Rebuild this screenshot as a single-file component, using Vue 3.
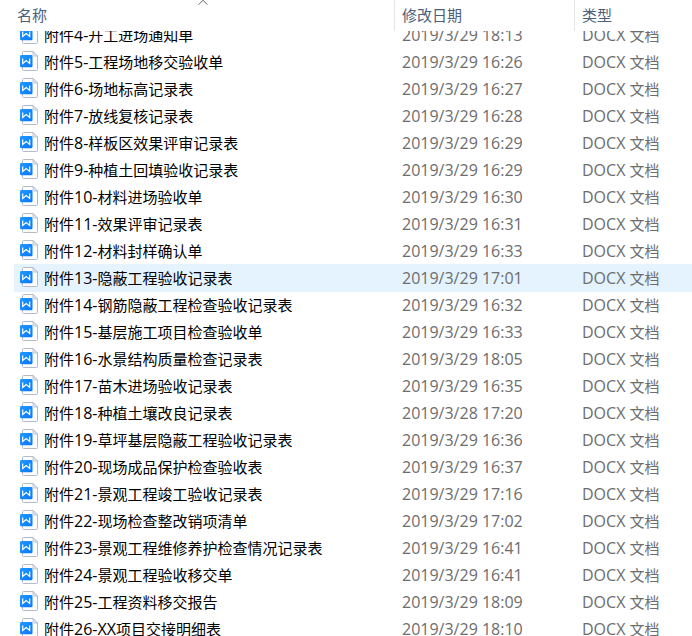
<script setup>
const selected = 13

const files = [
  [4, '开工进场通知单', '2019/3/29 18:13'],
  [5, '工程场地移交验收单', '2019/3/29 16:26'],
  [6, '场地标高记录表', '2019/3/29 16:27'],
  [7, '放线复核记录表', '2019/3/29 16:28'],
  [8, '样板区效果评审记录表', '2019/3/29 16:29'],
  [9, '种植土回填验收记录表', '2019/3/29 16:29'],
  [10, '材料进场验收单', '2019/3/29 16:30'],
  [11, '效果评审记录表', '2019/3/29 16:31'],
  [12, '材料封样确认单', '2019/3/29 16:33'],
  [13, '隐蔽工程验收记录表', '2019/3/29 17:01'],
  [14, '钢筋隐蔽工程检查验收记录表', '2019/3/29 16:32'],
  [15, '基层施工项目检查验收单', '2019/3/29 16:33'],
  [16, '水景结构质量检查记录表', '2019/3/29 18:05'],
  [17, '苗木进场验收记录表', '2019/3/29 16:35'],
  [18, '种植土壤改良记录表', '2019/3/28 17:20'],
  [19, '草坪基层隐蔽工程验收记录表', '2019/3/29 16:36'],
  [20, '现场成品保护检查验收表', '2019/3/29 16:37'],
  [21, '景观工程竣工验收记录表', '2019/3/29 17:16'],
  [22, '现场检查整改销项清单', '2019/3/29 17:02'],
  [23, '景观工程维修养护检查情况记录表', '2019/3/29 16:41'],
  [24, '景观工程验收移交单', '2019/3/29 16:41'],
  [25, '工程资料移交报告', '2019/3/29 18:09'],
  [26, 'XX项目交接明细表', '2019/3/29 18:10'],
].map(([no, title, date]) => ({
  no,
  date,
  // Latin and Chinese runs are set at slightly different sizes
  runs: `附件${no}-${title}`.match(/[\x20-\x7e]+|[^\x20-\x7e]+/g),
}))

const isLatin = (run) => /^[\x20-\x7e]+$/.test(run)
</script>

<template>
  <main class="explorer">
    <table class="files">
      <thead class="head">
        <tr class="row head-row">
          <th class="col sorted" scope="col" aria-sort="ascending">
            名称
            <svg class="sort" width="10" height="5" viewBox="0 0 10 5" aria-hidden="true">
              <path d="M0.5 4.7 L5 0.3 L9.5 4.7" fill="none" stroke="#666" stroke-width="1" />
            </svg>
          </th>
          <th class="col divided" scope="col">修改日期</th>
          <th class="col divided" scope="col">类型</th>
        </tr>
      </thead>
      <tbody class="body">
        <tr v-for="file in files" :key="file.no" class="row" :class="{ active: file.no === selected }">
          <td class="name">
            <svg class="icon" width="18" height="20" viewBox="0 0 18 20" aria-hidden="true">
              <defs>
                <linearGradient id="doc-blue" x1="0" y1="0" x2="1" y2="1">
                  <stop offset="0" stop-color="#1f9aff" />
                  <stop offset="1" stop-color="#0a76fa" />
                </linearGradient>
              </defs>
              <path d="M3.5 0.5 H13 L17.5 5 V18.5 Q17.5 19.5 16.5 19.5 H3.5 Q2.5 19.5 2.5 18.5 V1.5 Q2.5 0.5 3.5 0.5Z" fill="#fbfcfe" stroke="#b4bac6" />
              <path d="M13 0.5 V4 Q13 5 14 5 H17.5Z" fill="#e4e8ee" stroke="#b4bac6" stroke-width="0.8" />
              <rect x="0" y="4" width="12.5" height="12.3" rx="1.4" fill="url(#doc-blue)" />
              <path d="M2.7 7.4 V12.4 L6.2 9.6 L9.7 12.4 V7.4" fill="none" stroke="#fff" stroke-width="1.2" />
            </svg>
            <span class="label"><span v-for="(run, i) in file.runs" :key="i" :class="{ latin: isLatin(run) }">{{ run }}</span></span>
          </td>
          <td class="meta"><span class="latin">{{ file.date }}</span></td>
          <td class="meta"><span class="latin">DOCX </span>文档</td>
        </tr>
      </tbody>
    </table>
  </main>
</template>

<style>
body {
  background: #fff;
}
</style>

<style scoped>
.explorer {
  height: 100vh;
  overflow: hidden;
  padding-left: 14px;
  box-sizing: border-box;
  font-family: "Open Sans", "Noto Sans CJK SC", sans-serif;
  font-size: 15px;
  color: #000;
}

.files,
.body {
  display: block;
}

.head {
  display: block;
  position: relative;
  z-index: 1;
  background: #fff;
}

/* the list is scrolled a little way under the header */
.body {
  margin-top: -10px;
}

.row {
  display: grid;
  grid-template-columns: minmax(0, 380fr) minmax(0, 180fr) minmax(0, 118fr);
  height: 27px;
  line-height: 28px;
  white-space: nowrap;
}

.head-row {
  height: 31px;
  line-height: 31px;
}

.active {
  background: #e5f3ff;
  box-shadow: 0 1px #e5f3ff;
}

.col {
  padding: 0 3px;
  text-align: left;
  font-weight: 400;
  color: #4c607a;
}

.sorted {
  position: relative;
}

.sort {
  position: absolute;
  top: 0;
  left: 50%;
  margin-left: -6px;
}

.divided {
  padding-left: 7px;
  border-left: 1px solid #e5e5e5;
}

.name {
  display: flex;
  gap: 6px;
  padding: 0 0 0 6px;
}

.icon {
  flex: none;
  margin-top: 3px;
}

.label {
  overflow: hidden;
  text-overflow: ellipsis;
}

.meta {
  padding: 0 0 0 8px;
  color: #6d6d6d;
}

.latin {
  font-size: 16px;
  white-space: pre;
}
</style>
